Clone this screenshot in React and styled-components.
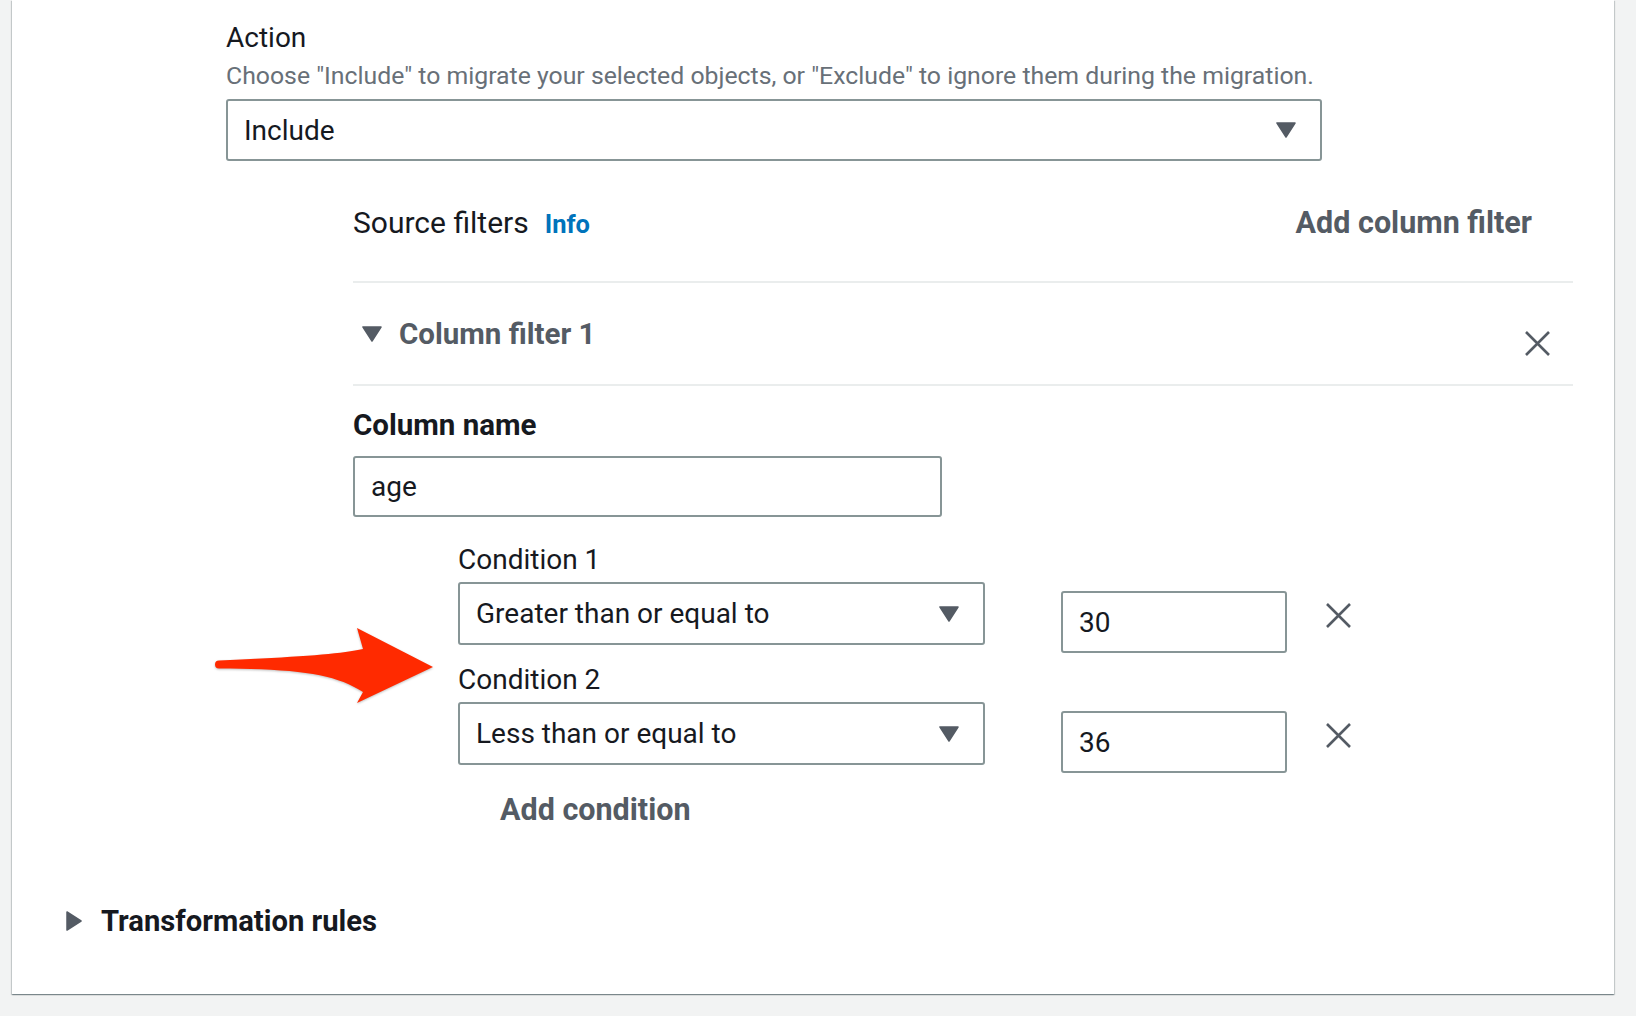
import React from "react";
import styled, { createGlobalStyle } from "styled-components";

const GlobalStyle = createGlobalStyle`
  html, body {
    margin: 0;
    padding: 0;
    background: #f2f3f3;
    font-family: Roboto, "Liberation Sans", Arial, sans-serif;
    color: #16191f;
  }
  * { box-sizing: border-box; }
`;

const Page = styled.div`
  width: 1636px;
  height: 1016px;
  padding: 0 22px 0 12px;
  overflow: hidden;
`;

const Card = styled.div`
  position: relative;
  background: #fff;
  padding: 19px 0 55px 54px;
  box-shadow: 0 1px 1px 0 rgba(0, 28, 36, 0.3),
    1px 1px 1px 0 rgba(0, 28, 36, 0.15),
    -1px 1px 1px 0 rgba(0, 28, 36, 0.15);
`;

const ActionBlock = styled.div`
  margin-left: 160px;
`;

const Label = styled.div`
  font-size: ${(p) => (p.bold ? 29.5 : 28)}px;
  line-height: 38px;
  color: #16191f;
  font-weight: ${(p) => (p.bold ? 700 : 400)};
`;

const Description = styled.div`
  font-size: 24.8px;
  line-height: 38px;
  color: #687078;
`;

const SelectBox = styled.div`
  display: flex;
  align-items: center;
  justify-content: space-between;
  width: ${(p) => p.width}px;
  height: ${(p) => p.height || 62}px;
  margin-top: ${(p) => p.top || 0}px;
  padding: 0 24px 0 16px;
  border: 2px solid #879596;
  border-radius: 3px;
  font-size: 28px;
  color: #16191f;
`;

const TextInput = styled.div`
  display: flex;
  align-items: center;
  width: ${(p) => p.width}px;
  height: ${(p) => p.height || 62}px;
  margin-top: ${(p) => p.top || 0}px;
  padding: 0 16px;
  border: 2px solid #879596;
  border-radius: 3px;
  font-size: 28px;
  color: #16191f;
`;

const SourceFilters = styled.div`
  margin: 42px 41px 0 287px;
`;

const FiltersHeader = styled.div`
  display: flex;
  align-items: center;
  justify-content: space-between;
  height: 80px;
  padding: 0 41px 38px 0;
  border-bottom: 2px solid #eaeded;
`;

const Heading = styled.div`
  display: flex;
  align-items: baseline;
  gap: 16px;
  font-size: 30px;
  line-height: 40px;
  color: #16191f;
`;

const InfoLink = styled.span`
  font-size: 25.5px;
  font-weight: 700;
  color: #0073bb;
`;

const GrayAction = styled.div`
  font-size: 30.5px;
  line-height: 36px;
  font-weight: 700;
  color: #545b64;
  margin-left: ${(p) => p.indent || 0}px;
  margin-top: ${(p) => p.top || 0}px;
`;

const FilterRow = styled.div`
  display: flex;
  align-items: center;
  justify-content: space-between;
  height: 103px;
  padding: 0 22px 0 9px;
  border-bottom: 2px solid #eaeded;
`;

const ExpandTitle = styled.div`
  display: flex;
  align-items: center;
  gap: ${(p) => p.gap || 17}px;
  font-size: ${(p) => p.size || 30}px;
  line-height: 36px;
  font-weight: 700;
  color: ${(p) => p.color || "#545b64"};
`;

const CloseButton = styled.div`
  display: flex;
  margin-top: ${(p) => p.top || 0}px;
  margin-left: ${(p) => p.left || 0}px;
`;

const FilterBody = styled.div`
  padding-top: 20px;
`;

const Conditions = styled.div`
  margin: 25px 0 0 105px;
`;

const ConditionLabel = styled(Label)`
  line-height: 36px;
  margin-top: ${(p) => p.top || 0}px;
`;

const ConditionRow = styled.div`
  display: flex;
  align-items: flex-start;
  margin-top: 4px;
`;

const ValueWrap = styled.div`
  margin-left: 76px;
`;

const TransformRow = styled.div`
  margin-top: 75px;
`;

const Arrow = styled.svg`
  position: absolute;
  left: 181px;
  top: 610px;
  filter: drop-shadow(0 1px 1px rgba(0, 0, 0, 0.25));
`;

const Caret = ({ dir = "down", color = "#545b64" }) =>
  dir === "down" ? (
    <svg width="20" height="16" viewBox="0 0 20 16">
      <path d="M1 1 L19 1 L10 15 Z" fill={color} strokeLinejoin="round" stroke={color} strokeWidth="1.5" />
    </svg>
  ) : (
    <svg width="16" height="20" viewBox="0 0 16 20">
      <path d="M1 1 L15 10 L1 19 Z" fill={color} strokeLinejoin="round" stroke={color} strokeWidth="1.5" />
    </svg>
  );

const XIcon = () => (
  <svg width="27" height="27" viewBox="0 0 27 27">
    <path d="M2 2 L25 25 M25 2 L2 25" stroke="#545b64" strokeWidth="2.6" fill="none" />
  </svg>
);

const conditions = [
  { label: "Condition 1", op: "Greater than or equal to", value: "30", top: 0 },
  { label: "Condition 2", op: "Less than or equal to", value: "36", top: 9 },
];

export default function App() {
  return (
    <Page>
      <GlobalStyle />
      <Card>
        <ActionBlock>
          <Label>Action</Label>
          <Description>
            Choose "Include" to migrate your selected objects, or "Exclude" to
            ignore them during the migration.
          </Description>
          <SelectBox width={1096} top={4}>
            <span>Include</span>
            <Caret />
          </SelectBox>
        </ActionBlock>

        <SourceFilters>
          <FiltersHeader>
            <Heading>
              Source filters <InfoLink>Info</InfoLink>
            </Heading>
            <GrayAction>Add column filter</GrayAction>
          </FiltersHeader>

          <FilterRow>
            <ExpandTitle size={29.5}>
              <Caret />
              Column filter 1
            </ExpandTitle>
            <CloseButton top={20}>
              <XIcon />
            </CloseButton>
          </FilterRow>

          <FilterBody>
            <Label bold>Column name</Label>
            <TextInput width={589} height={61} top={12}>
              age
            </TextInput>

            <Conditions>
              {conditions.map((c) => (
                <div key={c.label}>
                  <ConditionLabel top={c.top}>{c.label}</ConditionLabel>
                  <ConditionRow>
                    <SelectBox width={527} height={63}>
                      <span>{c.op}</span>
                      <Caret />
                    </SelectBox>
                    <ValueWrap>
                      <TextInput width={226} height={62} top={9}>
                        {c.value}
                      </TextInput>
                    </ValueWrap>
                    <CloseButton top={20} left={38}>
                      <XIcon />
                    </CloseButton>
                  </ConditionRow>
                </div>
              ))}
              <GrayAction indent={42} top={19}>
                Add condition
              </GrayAction>
            </Conditions>
          </FilterBody>
        </SourceFilters>

        <TransformRow>
          <ExpandTitle gap={19} size={29.2} color="#16191f">
            <Caret dir="right" />
            Transformation rules
          </ExpandTitle>
        </TransformRow>

        <Arrow width="260" height="110" viewBox="193 610 260 110">
          <path
            d="M363 649 L357 628 L433 667 L357 703 L363 692 C335 674 300 669 219 668.5 A4 4 0 0 1 219 660.5 C300 657 340 654 363 649 Z"
            fill="#ff2a00"
          />
        </Arrow>
      </Card>
    </Page>
  );
}
